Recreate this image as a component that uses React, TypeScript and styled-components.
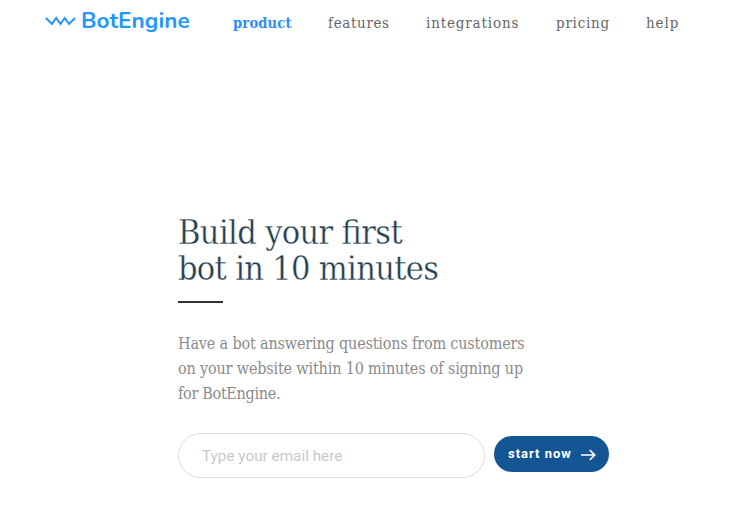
import React from "react";
import styled, { createGlobalStyle } from "styled-components";

const slab = `"Roboto Slab", "DejaVu Serif Condensed", "DejaVu Serif", serif`;

const GlobalStyle = createGlobalStyle`
  * { box-sizing: border-box; }
  body { margin: 0; background: #fff; }
`;

const Page = styled.div`
  width: 736px;
  height: 512px;
  overflow: hidden;
  background: #fff;
`;

const Header = styled.header`
  display: flex;
  height: 44px;
  padding-left: 45px;
`;

const Logo = styled.a`
  display: flex;
  width: 188px;
  color: #2497fb;
  text-decoration: none;
`;

const LogoMark = styled.svg`
  width: 31px;
  height: 10px;
  margin-top: 16px;
  overflow: visible;
`;

const LogoName = styled.span`
  margin: 7px 0 0 5px;
  font: 700 22.5px/28px Nunito, "Open Sans", sans-serif;
  letter-spacing: 0.05px;
`;

const Nav = styled.nav`
  display: flex;
  align-items: baseline;
  padding-top: 12px;
`;

const NavLink = styled.a<{ $active?: boolean; $width: number; $spacing: number }>`
  width: ${(p) => p.$width}px;
  font-family: ${slab};
  font-stretch: condensed;
  font-weight: ${(p) => (p.$active ? 700 : 400)};
  font-size: ${(p) => (p.$active ? 14.5 : 15)}px;
  line-height: 21px;
  letter-spacing: ${(p) => p.$spacing}px;
  white-space: nowrap;
  color: ${(p) => (p.$active ? "#2b8cfb" : "#666")};
  text-decoration: none;
`;

const Main = styled.main`
  padding: 170px 0 0 178px;
`;

const Title = styled.h1`
  margin: 0;
  font-family: ${slab};
  font-stretch: condensed;
  font-weight: 300;
  font-size: 34px;
  line-height: 36px;
  color: #263f50;
  -webkit-text-stroke: 0.3px #fff;
  font-feature-settings: "liga" 1;
`;

const Line = styled.span<{ $spacing: number }>`
  display: block;
  white-space: nowrap;
  letter-spacing: ${(p) => p.$spacing}px;
`;

const Rule = styled.div`
  width: 45px;
  height: 2px;
  margin-top: 15px;
  background: #333;
`;

const Copy = styled.p`
  margin: 28px 0 0;
  font-family: ${slab};
  font-stretch: condensed;
  font-size: 16px;
  line-height: 25.2px;
  color: #8b8b8b;
`;

const Form = styled.form`
  display: flex;
  align-items: center;
  gap: 9px;
  margin-top: 26px;
`;

const Email = styled.input`
  width: 307px;
  height: 45px;
  padding: 1px 23px 0;
  border: 1px solid #ddd;
  border-radius: 23px;
  background: #fff;
  font: 400 15.3px Roboto, sans-serif;
  outline: none;
  &::placeholder { color: #c9c9c9; opacity: 1; }
`;

const Submit = styled.button`
  display: flex;
  align-items: center;
  width: 115px;
  height: 36px;
  margin-top: -3px;
  padding: 0 0 0 14px;
  border: 0;
  border-radius: 18px;
  background: #145694;
  color: #fff;
  font: 700 13px Roboto, sans-serif;
  letter-spacing: 1px;
  white-space: nowrap;
`;

const Arrow = styled.svg`
  width: 15px;
  height: 12px;
  margin: 2px 0 0 9px;
  flex: none;
`;

const links = [
  { label: "product", width: 95, spacing: 0.2, active: true },
  { label: "features", width: 98, spacing: 0.65 },
  { label: "integrations", width: 130, spacing: 0.85 },
  { label: "pricing", width: 90, spacing: 0.75 },
  { label: "help", width: 40, spacing: 0.9 },
];

export default function App() {
  return (
    <Page>
      <GlobalStyle />
      <Header>
        <Logo href="#">
          <LogoMark viewBox="0 0 31 10" fill="none" stroke="currentColor" strokeWidth="2">
            <path d="M.8 2 7 8 11.2 2 15.5 8 19.7 2 24 8 30 2" />
          </LogoMark>
          <LogoName>BotEngine</LogoName>
        </Logo>
        <Nav>
          {links.map((l) => (
            <NavLink key={l.label} href="#" $active={l.active} $width={l.width} $spacing={l.spacing}>
              {l.label}
            </NavLink>
          ))}
        </Nav>
      </Header>
      <Main>
        <Title>
          <Line $spacing={-0.65}>Build your first</Line>
          <Line $spacing={-0.7}>bot in 10 minutes</Line>
        </Title>
        <Rule />
        <Copy>
          <Line $spacing={-0.16}>Have a bot answering questions from customers</Line>
          <Line $spacing={-0.16}>on your website within 10 minutes of signing up</Line>
          <Line $spacing={-0.3}>for BotEngine.</Line>
        </Copy>
        <Form onSubmit={(e) => e.preventDefault()}>
          <Email type="email" placeholder="Type your email here" />
          <Submit type="submit">
            start now
            <Arrow viewBox="0 0 15 12" fill="none" stroke="currentColor" strokeWidth="1.7">
              <path d="M0 6h13.5M8.8 1.2 13.7 6 8.8 10.8" />
            </Arrow>
          </Submit>
        </Form>
      </Main>
    </Page>
  );
}
